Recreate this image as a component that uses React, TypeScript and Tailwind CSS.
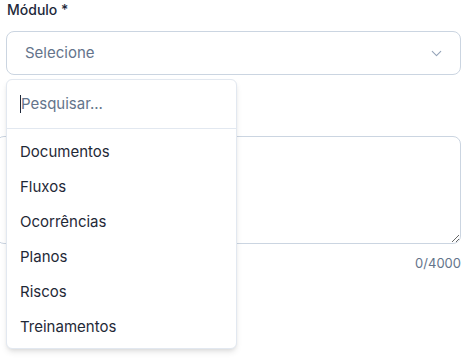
import React, { useState } from "react";
import { ChevronDown } from "lucide-react";

const modulos = ["Documentos", "Fluxos", "Ocorrências", "Planos", "Riscos", "Treinamentos"];

export default function App() {
  const [busca, setBusca] = useState("");
  const [descricao, setDescricao] = useState("");

  const filtrados = modulos.filter((m) => m.toLowerCase().includes(busca.toLowerCase()));

  return (
    <div className="relative w-[470px] h-[360px] overflow-hidden bg-white font-['Inter',sans-serif]">
      <div className="flex flex-col pl-[6px] pr-[9px]">
        <label className="ml-px text-sm leading-5 font-medium text-[#1e293b]">Módulo *</label>
        <button className="mt-[11px] h-[44px] w-full flex items-center justify-between rounded-lg border border-[#cbd5e1] bg-white pl-[18px] pr-[15px] text-[15px] text-[#64748b]">
          <span>Selecione</span>
          <ChevronDown size={17} strokeWidth={1.5} className="text-[#94a3b8]" />
        </button>
        <label className="mt-[30px] text-sm leading-5 font-medium text-[#1e293b]">Descrição</label>
        <textarea
          value={descricao}
          onChange={(e) => setDescricao(e.target.value)}
          maxLength={4000}
          className="-ml-[10px] mt-[11px] h-[108px] rounded-lg border border-[#cbd5e1] bg-white outline-none"
        />
        <span className="mt-[11px] self-end text-[13px] leading-4 text-[#64748b]">{descricao.length}/4000</span>
      </div>

      <div className="absolute left-[6px] top-[79px] w-[231px] h-[270px] rounded-md border border-[#e2e8f0] bg-white shadow-md">
        <div className="h-[49px] flex items-center border-b border-[#e2e8f0] pl-[13px] pr-[13px]">
          <span className="w-px h-[18px] bg-[#1e293b]" />
          <input
            autoFocus
            value={busca}
            onChange={(e) => setBusca(e.target.value)}
            placeholder="Pesquisar..."
            className="w-full bg-transparent text-[15px] text-[#1e293b] placeholder:text-[#64748b] outline-none"
          />
        </div>
        <ul className="pt-[6px]">
          {filtrados.map((m) => (
            <li key={m} className="h-[35px] flex items-center px-[13px] text-[15px] text-[#1f2937]">
              {m}
            </li>
          ))}
        </ul>
      </div>
    </div>
  );
}
